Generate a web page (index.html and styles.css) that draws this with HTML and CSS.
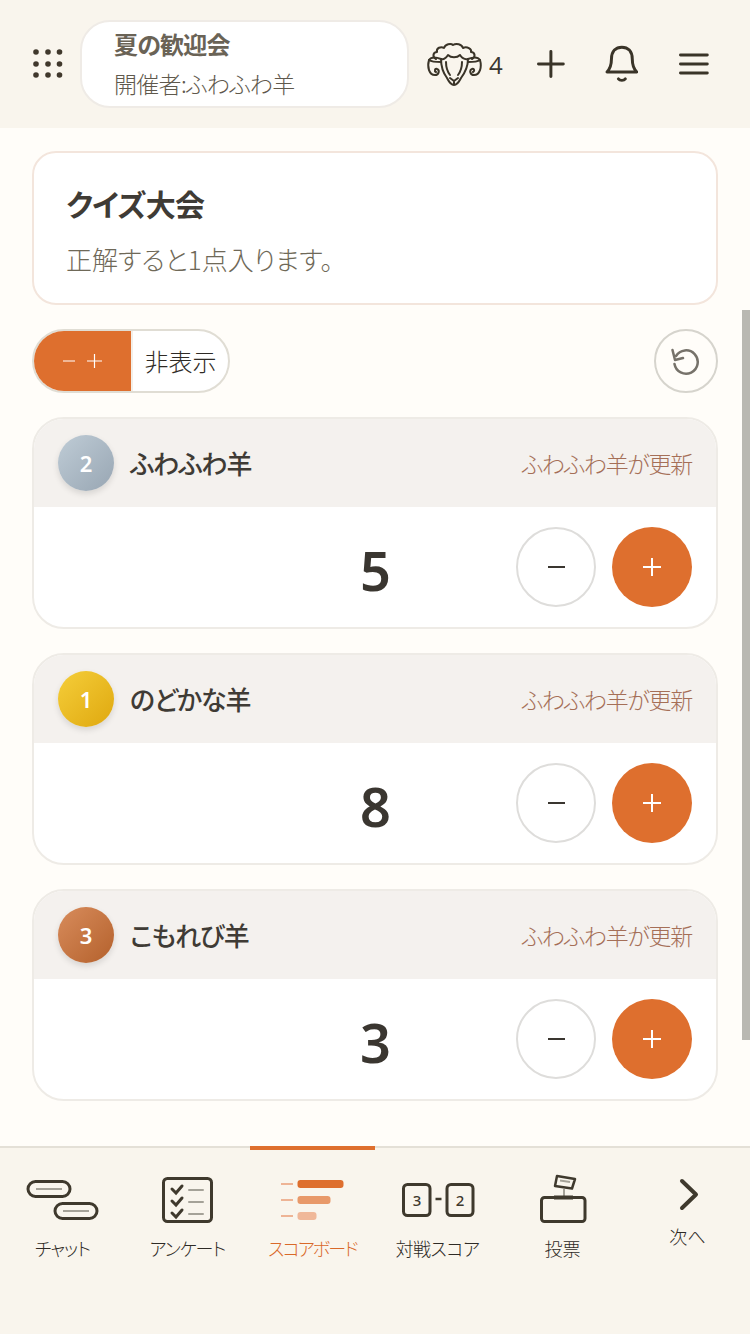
FILE: index.html
```html
<!DOCTYPE html>
<html lang="ja">
<head>
    <meta charset="UTF-8">
    <meta name="viewport" content="width=device-width,initial-scale=1.0">
    <title>スコアボード</title>
    <link rel="stylesheet" href="styles.css">
</head>
<body>
    <div class="app">

        <!-- ヘッダー -->
        <header class="header">
            <svg class="dots" width="30" height="30" viewBox="0 0 30 30" fill="#40382c">
                <circle cx="3" cy="3" r="2.800"/><circle cx="15" cy="3" r="2.800"/><circle cx="26.500" cy="3" r="2.800"/>
                <circle cx="3" cy="15" r="2.800"/><circle cx="15" cy="15" r="2.800"/><circle cx="26.500" cy="15" r="2.800"/>
                <circle cx="3" cy="26" r="2.800"/><circle cx="15" cy="26" r="2.800"/><circle cx="26.500" cy="26" r="2.800"/>
            </svg>
            <div class="event-pill">
                <div class="event-name">夏の歓迎会</div>
                <div class="event-host">開催者:ふわふわ羊</div>
            </div>
            <div class="members">
                <svg width="56" height="44" viewBox="0 0 56 44" fill="none" stroke="#3a3428" stroke-width="2" stroke-linecap="round" stroke-linejoin="round">
                    <path d="M10 17 C6 15 7 10 11 10 C10 6 15 4 18 6 C19 2 25 1 27 3 C30 1 36 2 37 6 C41 4 46 7 45 10 C49 10 50 15 46 17"/>
                    <path d="M15 17 C18 18 20 16 22 13 C25 16 31 16 34 13 C36 16 38 18 42 17"/>
                    <path d="M15 17 C15 25 18 32 21 36 C23 40 25 43 28 43 C31 43 33 40 35 36 C38 32 42 25 42 17"/>
                    <path d="M20 20 C20 25 21 29 24 33 M36 20 C36 25 35 29 32 33"/>
                    <path d="M24 36 L28 39 L32 36 M28 39 V42"/>
                    <path d="M15 17 C10 15 5 15 3 18 C6 20 11 20 15 20"/>
                    <path d="M42 17 C47 15 52 15 54 18 C51 20 46 20 42 20"/>
                    <path d="M3 18 C1 25 3 33 9 33 C13 33 14 28 11 27 C9 26 8 29 10 30"/>
                    <path d="M54 18 C56 25 54 33 48 33 C44 33 43 28 46 27 C48 26 49 29 47 30"/>
                </svg>
                <span class="member-count">4</span>
            </div>
            <svg class="head-plus" width="28" height="28" viewBox="0 0 28 28" fill="none" stroke="#3a3428" stroke-width="3" stroke-linecap="round">
                <path d="M1.500 14 H26.500 M14 1.500 V26.500"/>
            </svg>
            <svg class="bell" width="34" height="40" viewBox="0 0 34 40" fill="none" stroke="#3a3428" stroke-width="3" stroke-linecap="round" stroke-linejoin="round">
                <path d="M2 27 C5 24 6.500 21 6.500 14 C6.500 6 11 2 17 2 C23 2 27.500 6 27.500 14 C27.500 21 29 24 32 27 Z"/>
                <path d="M13.500 34 C15 36 19 36 20.500 34"/>
            </svg>
            <svg class="menu" width="30" height="22" viewBox="0 0 30 22" fill="none" stroke="#3a3428" stroke-width="3" stroke-linecap="round">
                <path d="M1.500 2 H28.500 M1.500 11 H28.500 M1.500 20 H28.500"/>
            </svg>
        </header>

        <!-- メイン -->
        <main class="main">
            <section class="info-card">
                <h1 class="info-title">クイズ大会</h1>
                <p class="info-desc">正解すると1点入ります。</p>
            </section>

            <div class="controls">
                <div class="toggle">
                    <div class="toggle-on">
                        <svg width="39" height="16" viewBox="0 0 39 16" fill="none" stroke="#fff" stroke-width="1.200">
                            <path d="M0 8 H12 M24 8 H39 M31.500 1 V15"/>
                        </svg>
                    </div>
                    <div class="toggle-off">非表示</div>
                </div>
                <button class="reset-btn">
                    <svg width="30" height="30" viewBox="0 0 30 30" fill="none" stroke="#76726a" stroke-width="2.500" stroke-linecap="round" stroke-linejoin="round">
                        <path d="M5 10 A11.700 11.700 0 1 1 3.500 18"/>
                        <path d="M1.500 4 L4 14 L12 12"/>
                    </svg>
                </button>
            </div>

            <section class="score-card">
                <div class="score-head">
                    <div class="rank rank-silver">2</div>
                    <div class="player">ふわふわ羊</div>
                    <div class="updated">ふわふわ羊が更新</div>
                </div>
                <div class="score-body">
                    <div class="score">5</div>
                    <button class="round-btn minus-btn"><span class="minus-bar"></span></button>
                    <button class="round-btn plus-btn"><span class="plus-mark"></span></button>
                </div>
            </section>

            <section class="score-card">
                <div class="score-head">
                    <div class="rank rank-gold">1</div>
                    <div class="player">のどかな羊</div>
                    <div class="updated">ふわふわ羊が更新</div>
                </div>
                <div class="score-body">
                    <div class="score">8</div>
                    <button class="round-btn minus-btn"><span class="minus-bar"></span></button>
                    <button class="round-btn plus-btn"><span class="plus-mark"></span></button>
                </div>
            </section>

            <section class="score-card">
                <div class="score-head">
                    <div class="rank rank-bronze">3</div>
                    <div class="player">こもれび羊</div>
                    <div class="updated">ふわふわ羊が更新</div>
                </div>
                <div class="score-body">
                    <div class="score">3</div>
                    <button class="round-btn minus-btn"><span class="minus-bar"></span></button>
                    <button class="round-btn plus-btn"><span class="plus-mark"></span></button>
                </div>
            </section>

            <div class="scrollbar"></div>
        </main>

        <!-- 下部タブ -->
        <nav class="tabbar">
            <div class="tab">
                <svg width="74" height="46" viewBox="0 0 74 46" fill="none">
                    <rect x="2" y="4.500" width="42" height="15" rx="7.500" stroke="#3f392d" stroke-width="3"/>
                    <path d="M10 12 H36" stroke="#a5a298" stroke-width="2"/>
                    <rect x="29" y="26.500" width="42" height="15" rx="7.500" stroke="#3f392d" stroke-width="3"/>
                    <path d="M37 34 H63" stroke="#a5a298" stroke-width="2"/>
                </svg>
                <span class="tab-label tab-kana">チャット</span>
            </div>
            <div class="tab">
                <svg width="52" height="46" viewBox="0 0 52 46" fill="none" stroke-linecap="round">
                    <rect x="1.500" y="1.500" width="48" height="43" rx="4" stroke="#3f392d" stroke-width="3"/>
                    <path d="M10 12 L14 16 L20 9 M10 24 L14 28 L20 21 M10 36 L14 40 L20 33" stroke="#3f392d" stroke-width="3"/>
                    <path d="M27 13 H41 M27 25 H41 M27 37 H41" stroke="#a5a298" stroke-width="2"/>
                </svg>
                <span class="tab-label tab-kana">アンケート</span>
            </div>
            <div class="tab tab-active">
                <svg width="64" height="46" viewBox="0 0 64 46" fill="none">
                    <path d="M0 7 H12 M0 23 H12 M0 39 H12" stroke="#eeb495" stroke-width="2"/>
                    <rect x="16.500" y="3" width="46" height="8" rx="3" fill="#de6f2e"/>
                    <rect x="16.500" y="19" width="33" height="8" rx="3" fill="#e8996a"/>
                    <rect x="16.500" y="35" width="19" height="8" rx="3" fill="#f0b899"/>
                </svg>
                <span class="tab-label tab-kana">スコアボード</span>
            </div>
            <div class="tab">
                <svg width="74" height="46" viewBox="0 0 74 46" fill="none">
                    <rect x="2.500" y="7.500" width="26.500" height="31" rx="4" stroke="#3f392d" stroke-width="3"/>
                    <rect x="46" y="7.500" width="26" height="31" rx="4" stroke="#3f392d" stroke-width="3"/>
                    <path d="M34.500 22 H40.500" stroke="#3f392d" stroke-width="2.500"/>
                    <text x="16" y="29" class="vs-num">3</text>
                    <text x="59" y="29" class="vs-num">2</text>
                </svg>
                <span class="tab-label tab-kana-wide">対戦スコア</span>
            </div>
            <div class="tab">
                <svg width="48" height="50" viewBox="0 0 48 50" fill="none">
                    <path d="M18 3 L36 6 L33 15.500 L16 13 Z" stroke="#3f392d" stroke-width="2.500" stroke-linejoin="round"/>
                    <path d="M21 7.500 L31 9" stroke="#a5a298" stroke-width="2"/>
                    <path d="M25 16 V23" stroke="#a5a298" stroke-width="2"/>
                    <rect x="2.500" y="24.500" width="43.500" height="24" rx="3" stroke="#3f392d" stroke-width="3"/>
                    <path d="M15 24.500 H34" stroke="#3f392d" stroke-width="4"/>
                </svg>
                <span class="tab-label">投票</span>
            </div>
            <div class="tab tab-next">
                <svg width="22" height="33" viewBox="0 0 22 33" fill="none" stroke="#3f392d" stroke-width="4" stroke-linecap="round" stroke-linejoin="round">
                    <path d="M5 3 L19 16.500 L5 30"/>
                </svg>
                <span class="tab-label">次へ</span>
            </div>
        </nav>

    </div>
</body>
</html>
```

FILE: styles.css
```css
* {
    margin: 0;
    padding: 0;
    box-sizing: border-box;
}

body {
    font-family: "Noto Sans CJK JP", "Noto Sans", sans-serif;
    font-feature-settings: "palt";
    color: #3a3630;
    background: #fffdf9;
}

.app {
    width: 750px;
    height: 1334px;
    display: flex;
    flex-direction: column;
    overflow: hidden;
}

button {
    cursor: pointer;
    background: none;
    font-family: inherit;
}

/* ---------------------------------ヘッダー---------------------------------- */

.header {
    height: 128px;
    flex-shrink: 0;
    display: flex;
    align-items: center;
    padding: 0 41px 0 33px;
    background: #f9f5ed;
}

.dots {
    margin-right: 17px;
    flex-shrink: 0;
}

.event-pill {
    width: 329px;
    height: 88px;
    padding: 4px 0 0 32px;
    background: #fff;
    border: 2px solid #efebe6;
    border-radius: 30px;
    flex-shrink: 0;
}

.event-name {
    font-size: 24px;
    font-weight: 700;
    line-height: 36px;
    letter-spacing: -0.800px;
    color: #6a6356;
}

.event-host {
    font-size: 23px;
    font-weight: 300;
    line-height: 42px;
    letter-spacing: -0.700px;
    color: #5f594d;
}

.members {
    display: flex;
    align-items: center;
    gap: 7px;
    margin-left: 17px;
}

.member-count {
    font-family: "Open Sans", sans-serif;
    font-size: 24px;
    color: #3a3630;
}

.head-plus {
    margin-left: 34px;
}

.bell {
    margin-left: 40px;
    margin-top: 2px;
}

.menu {
    margin-left: 41px;
}

/* ---------------------------------主体内容---------------------------------- */

.main {
    flex: 1;
    position: relative;
    display: flex;
    flex-direction: column;
    gap: 24px;
    padding: 23px 32px 0;
}

.info-card {
    height: 154px;
    padding: 18px 32px;
    background: #fff;
    border: 2px solid #f3e5dc;
    border-radius: 24px;
}

.info-title {
    font-size: 30px;
    font-weight: 700;
    line-height: 64px;
    letter-spacing: -0.700px;
    color: #3f3b35;
}

.info-desc {
    font-size: 26px;
    font-weight: 300;
    line-height: 48px;
    color: #6f6958;
}

.controls {
    display: flex;
    justify-content: space-between;
    align-items: center;
}

.toggle {
    width: 198px;
    height: 64px;
    display: flex;
    background: #fff;
    border: 2px solid #e0ddd4;
    border-radius: 32px;
    overflow: hidden;
}

.toggle-on {
    width: 97px;
    display: flex;
    align-items: center;
    justify-content: center;
    background: #de6f2e;
}

.toggle-off {
    flex: 1;
    text-align: center;
    font-size: 24px;
    font-weight: 300;
    line-height: 60px;
    color: #2e2a25;
    border-left: 2px solid #f4efe8;
}

.reset-btn {
    width: 64px;
    height: 64px;
    display: flex;
    align-items: center;
    justify-content: center;
    background: #fffdf9;
    border: 2px solid #d6d4cd;
    border-radius: 50%;
}

.score-card {
    height: 212px;
    background: #fff;
    border: 2px solid #eeebe6;
    border-radius: 32px;
    overflow: hidden;
}

.score-head {
    height: 88px;
    display: flex;
    align-items: center;
    padding: 0 24px;
    background: #f4f1ee;
}

.rank {
    width: 56px;
    height: 56px;
    display: flex;
    align-items: center;
    justify-content: center;
    border-radius: 50%;
    font-family: "Noto Sans", sans-serif;
    font-size: 22px;
    font-weight: 600;
    color: #fff;
    box-shadow: 0 3px 6px rgba(0, 0, 0, 0.12);
}

.rank-silver {
    background: linear-gradient(135deg, #bfccd6, #98a6b3);
}

.rank-gold {
    background: linear-gradient(135deg, #f5ce3a, #dfa80f);
}

.rank-bronze {
    background: linear-gradient(135deg, #d88c5c, #b4612c);
}

.player {
    margin-left: 16px;
    padding-bottom: 2px;
    font-size: 26px;
    font-weight: 500;
    letter-spacing: -1.100px;
    color: #3f3b35;
}

.updated {
    margin-left: auto;
    font-size: 23px;
    font-weight: 300;
    letter-spacing: -1.300px;
    color: #a56f57;
}

.score-body {
    height: 120px;
    display: flex;
    align-items: center;
    justify-content: flex-end;
    gap: 16px;
    padding-right: 24px;
}

.score {
    margin-right: 109px;
    margin-top: 6px;
    font-family: "Noto Sans", sans-serif;
    font-size: 54px;
    font-weight: 600;
    color: #3a3630;
}

.round-btn {
    width: 80px;
    height: 80px;
    display: flex;
    align-items: center;
    justify-content: center;
    border-radius: 50%;
}

.minus-btn {
    background: #fff;
    border: 2px solid #dedddb;
}

.plus-btn {
    background: #de6f2e;
    border: none;
}

.minus-bar {
    width: 17px;
    height: 2px;
    background: #3a3630;
}

.plus-mark {
    width: 18px;
    height: 18px;
    background:
        linear-gradient(#fff, #fff) center / 18px 2px no-repeat,
        linear-gradient(#fff, #fff) center / 2px 18px no-repeat;
}

.scrollbar {
    position: absolute;
    right: 0;
    top: 182px;
    width: 8px;
    height: 730px;
    background: #b9b8b2;
}

/* ---------------------------------下部タブ---------------------------------- */

.tabbar {
    height: 188px;
    flex-shrink: 0;
    display: flex;
    background: #f9f5ed;
    border-top: 2px solid #e4e0d7;
}

.tab {
    width: 125px;
    height: 114px;
    display: flex;
    flex-direction: column;
    align-items: center;
    justify-content: flex-end;
    gap: 11px;
    position: relative;
}

.tab-label {
    font-size: 18px;
    font-weight: 300;
    line-height: 28px;
    color: #2e2a25;
}

.tab-kana {
    letter-spacing: -1px;
}

.tab-kana-wide {
    letter-spacing: -0.400px;
}

.tab-active::before {
    content: "";
    position: absolute;
    left: 0;
    right: 0;
    top: -2px;
    height: 4px;
    background: #de6f2e;
}

.tab-active .tab-label {
    letter-spacing: -1.800px;
    color: #d9692a;
}

.tab-next {
    height: 102px;
}

.vs-num {
    font-family: "Noto Sans", sans-serif;
    font-size: 15px;
    font-weight: 500;
    fill: #3f392d;
    text-anchor: middle;
}
```
